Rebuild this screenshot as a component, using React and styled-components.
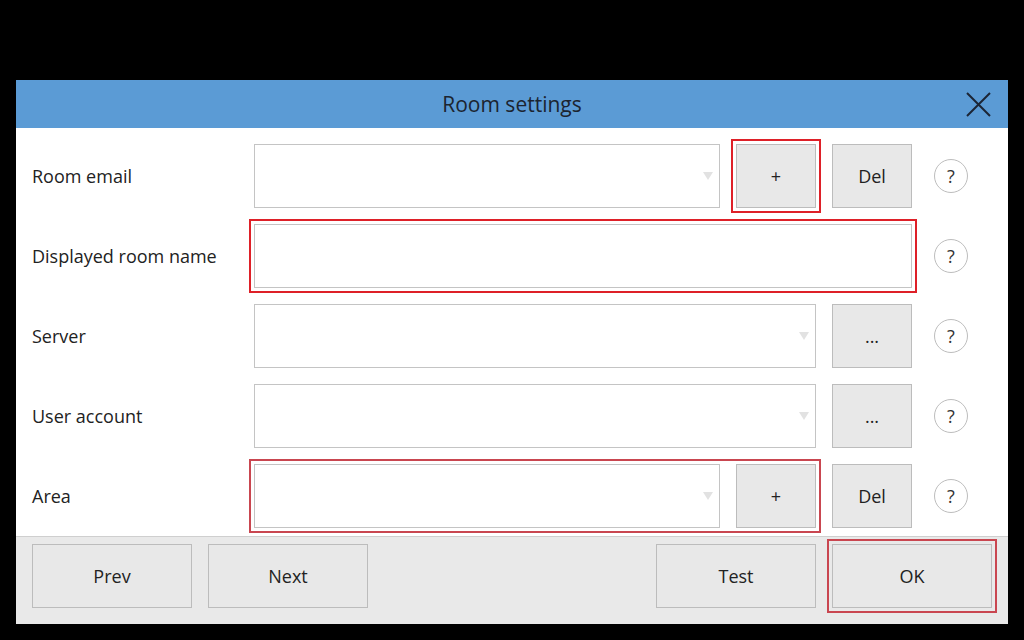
import styled, { createGlobalStyle, css } from 'styled-components'

const GlobalStyle = createGlobalStyle`
  html, body {
    margin: 0;
    padding: 0;
    background: #000;
  }
  body {
    font-family: 'Open Sans', 'Liberation Sans', sans-serif;
  }
`

const Screen = styled.div`
  width: 1024px;
  height: 640px;
  background: #000;
  padding: 80px 16px 16px 16px;
  box-sizing: border-box;
`
const Dialog = styled.div`
  width: 992px;
  height: 544px;
  background: #fff;
  display: flex;
  flex-direction: column;
`
const TitleBar = styled.div`
  height: 48px;
  background: #5b9bd5;
  display: flex;
  align-items: center;
  justify-content: center;
  position: relative;
  color: #1b2430;
  font-size: 21px;
`
const CloseButton = styled.div`
  position: absolute;
  right: 17px;
  top: 12px;
  width: 25px;
  height: 25px;
  display: flex;
`
const Body = styled.div`
  flex: 1;
  padding-top: 8px;
  display: flex;
  flex-direction: column;
`
const Row = styled.div`
  height: 80px;
  display: flex;
  align-items: center;
  gap: 16px;
  padding-left: 16px;
`
const Label = styled.div`
  width: 206px;
  font-size: 18px;
  color: #222;
`
const highlight = css`
  outline: 2px solid ${(p) => p.$hl};
  outline-offset: 3px;
`
const Group = styled.div`
  display: flex;
  gap: 16px;
  ${(p) => p.$hl && highlight}
`
const Combo = styled.div`
  width: ${(p) => p.$w}px;
  height: 64px;
  box-sizing: border-box;
  border: 1px solid #c4c4c4;
  background: #fff;
  display: flex;
  align-items: center;
  justify-content: flex-end;
  padding-right: 6px;
  ${(p) => p.$hl && highlight}
`
const Arrow = styled.div`
  width: 0;
  height: 0;
  border-left: 5px solid transparent;
  border-right: 5px solid transparent;
  border-top: 8px solid #e2e2e2;
`
const Button = styled.div`
  width: ${(p) => p.$w || 80}px;
  height: 64px;
  box-sizing: border-box;
  border: 1px solid #bcbcbc;
  background: #e8e8e8;
  display: flex;
  align-items: center;
  justify-content: center;
  font-size: 18px;
  color: #222;
  ${(p) => p.$hl && highlight}
`
const HelpCell = styled.div`
  width: 46px;
  display: flex;
  justify-content: center;
`
const Help = styled.div`
  width: 34px;
  height: 34px;
  box-sizing: border-box;
  border: 1px solid #bdbdbd;
  border-radius: 50%;
  display: flex;
  align-items: center;
  justify-content: center;
  font-size: 18px;
  color: #333;
`
const Footer = styled.div`
  height: 88px;
  box-sizing: border-box;
  border-top: 1px solid #cfcfcf;
  background: #e9e9e9;
  display: flex;
  gap: 16px;
  padding: 7px 16px 0 16px;
`
const Spacer = styled.div`
  flex: 1;
`

const RED = '#de2028'
const RED2 = '#c94650'

function HelpIcon() {
  return (
    <HelpCell>
      <Help>?</Help>
    </HelpCell>
  )
}

export default function App() {
  return (
    <>
      <GlobalStyle />
      <Screen>
        <Dialog>
          <TitleBar>
            Room settings
            <CloseButton>
              <svg width='25' height='25' viewBox='0 0 25 25'>
                <path d='M1 1 L24 24 M24 1 L1 24' stroke='#1b2535' strokeWidth='2' fill='none' />
              </svg>
            </CloseButton>
          </TitleBar>
          <Body>
            <Row>
              <Label>Room email</Label>
              <Combo $w={466}><Arrow /></Combo>
              <Button $hl={RED}>+</Button>
              <Button>Del</Button>
              <HelpIcon />
            </Row>
            <Row>
              <Label>Displayed room name</Label>
              <Combo $w={658} $hl={RED} />
              <HelpIcon />
            </Row>
            <Row>
              <Label>Server</Label>
              <Combo $w={562}><Arrow /></Combo>
              <Button>...</Button>
              <HelpIcon />
            </Row>
            <Row>
              <Label>User account</Label>
              <Combo $w={562}><Arrow /></Combo>
              <Button>...</Button>
              <HelpIcon />
            </Row>
            <Row>
              <Label>Area</Label>
              <Group $hl={RED2}>
                <Combo $w={466}><Arrow /></Combo>
                <Button>+</Button>
              </Group>
              <Button>Del</Button>
              <HelpIcon />
            </Row>
          </Body>
          <Footer>
            <Button $w={160}>Prev</Button>
            <Button $w={160}>Next</Button>
            <Spacer />
            <Button $w={160}>Test</Button>
            <Button $w={160} $hl={RED2}>OK</Button>
          </Footer>
        </Dialog>
      </Screen>
    </>
  )
}
